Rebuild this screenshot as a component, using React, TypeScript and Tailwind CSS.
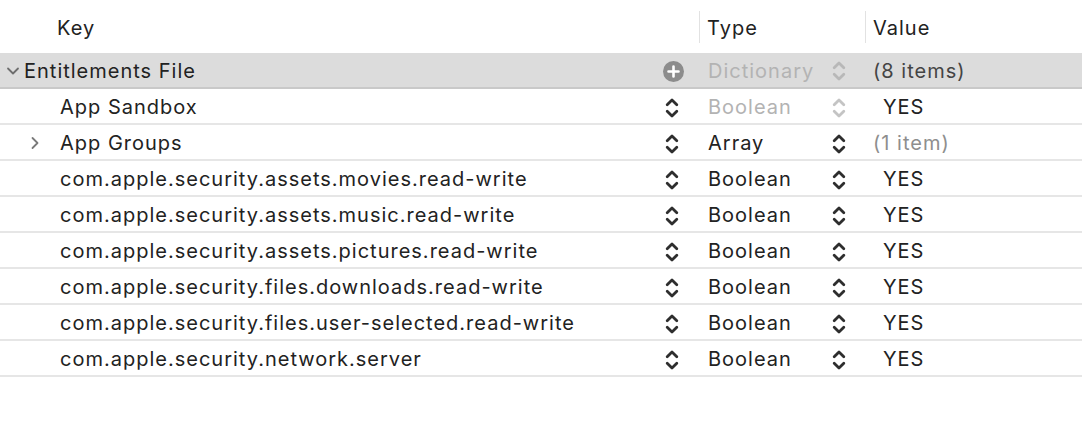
import type { ReactNode } from 'react'

type Row = {
  key: string
  type: string
  value: string
  expandable?: boolean
  typeDisabled?: boolean
  valueMuted?: boolean
}

const rows: Row[] = [
  { key: 'App Sandbox', type: 'Boolean', value: 'YES', typeDisabled: true },
  { key: 'App Groups', type: 'Array', value: '(1 item)', expandable: true, valueMuted: true },
  { key: 'com.apple.security.assets.movies.read-write', type: 'Boolean', value: 'YES' },
  { key: 'com.apple.security.assets.music.read-write', type: 'Boolean', value: 'YES' },
  { key: 'com.apple.security.assets.pictures.read-write', type: 'Boolean', value: 'YES' },
  { key: 'com.apple.security.files.downloads.read-write', type: 'Boolean', value: 'YES' },
  { key: 'com.apple.security.files.user-selected.read-write', type: 'Boolean', value: 'YES' },
  { key: 'com.apple.security.network.server', type: 'Boolean', value: 'YES' },
]

function Stepper({ color = '#2e2e2e' }: { color?: string }) {
  return (
    <svg width="14" height="22" viewBox="0 0 14 22" fill="none">
      <path d="M2.2 7.8 L7 3 L11.8 7.8" stroke={color} strokeWidth="2.8" strokeLinecap="round" strokeLinejoin="round" />
      <path d="M2.2 14.2 L7 19 L11.8 14.2" stroke={color} strokeWidth="2.8" strokeLinecap="round" strokeLinejoin="round" />
    </svg>
  )
}

function PlusCircle() {
  return (
    <svg width="21" height="21" viewBox="0 0 21 21">
      <circle cx="10.5" cy="10.5" r="10.5" fill="#8c8c8c" />
      <path d="M10.5 5.5 V15.5 M5.5 10.5 H15.5" stroke="#fff" strokeWidth="2.6" strokeLinecap="round" />
    </svg>
  )
}

function ChevronDown() {
  return (
    <svg width="14" height="10" viewBox="0 0 14 10" fill="none">
      <path d="M2 2.5 L7 7.5 L12 2.5" stroke="#6e6e6e" strokeWidth="1.8" strokeLinecap="round" strokeLinejoin="round" />
    </svg>
  )
}

function ChevronRight() {
  return (
    <svg width="10" height="14" viewBox="0 0 10 14" fill="none">
      <path d="M2.5 2 L7.5 7 L2.5 12" stroke="#7a7a7a" strokeWidth="1.8" strokeLinecap="round" strokeLinejoin="round" />
    </svg>
  )
}

function Cols({ a, b, c, className }: { a: ReactNode; b: ReactNode; c: ReactNode; className: string }) {
  return (
    <div className={`grid grid-cols-[699px_166px_1fr] ${className}`}>
      <div className="flex items-center">{a}</div>
      <div className="flex items-center">{b}</div>
      <div className="flex items-center">{c}</div>
    </div>
  )
}

export default function App() {
  return (
    <div
      className="h-[448px] w-[1082px] overflow-hidden bg-white text-[20px] tracking-[0.05em] text-[#222]"
      style={{ fontFamily: 'Inter, "Noto Sans", sans-serif' }}
    >
      <Cols
        className="h-[53px]"
        a={<span className="pl-[57px] pt-[3px]">Key</span>}
        b={
          <div className="flex h-[32px] w-full items-center border-l border-[#e2e2e2] pl-[7px] pt-[3px]">Type</div>
        }
        c={
          <div className="flex h-[32px] w-full items-center border-l border-[#e2e2e2] pl-[7px] pt-[3px]">Value</div>
        }
      />

      <Cols
        className="h-[36px] border-b-2 border-[#c9c9c9] bg-[#dcdcdc] pt-[2px]"
        a={
          <>
            <span className="flex w-[24px] justify-center pl-[2px]">
              <ChevronDown />
            </span>
            <span>Entitlements File</span>
            <span className="ml-auto mr-[15px] flex">
              <PlusCircle />
            </span>
          </>
        }
        b={
          <>
            <span className="pl-[9px] text-[#b3b3b3]">Dictionary</span>
            <span className="ml-auto mr-[19px] flex">
              <Stepper color="#b8b8b8" />
            </span>
          </>
        }
        c={<span className="pl-[8px] text-[#444]">(8 items)</span>}
      />

      {rows.map((r) => (
        <Cols
          key={r.key}
          className="h-[36px] border-b-2 border-[#e6e6e6] pt-[2px]"
          a={
            <>
              <span className="flex w-[60px] justify-end pr-[20px]">{r.expandable && <ChevronRight />}</span>
              <span>{r.key}</span>
              <span className="ml-auto mr-[20px] flex pt-[2px]">
                <Stepper />
              </span>
            </>
          }
          b={
            <>
              <span className={`pl-[9px] ${r.typeDisabled ? 'text-[#b3b3b3]' : ''}`}>{r.type}</span>
              <span className="ml-auto mr-[19px] flex pt-[2px]">
                <Stepper color={r.typeDisabled ? '#c4c4c4' : '#2e2e2e'} />
              </span>
            </>
          }
          c={
            <span className={r.valueMuted ? 'pl-[8px] text-[#8e8e8e]' : 'pl-[18px]'}>{r.value}</span>
          }
        />
      ))}
    </div>
  )
}
